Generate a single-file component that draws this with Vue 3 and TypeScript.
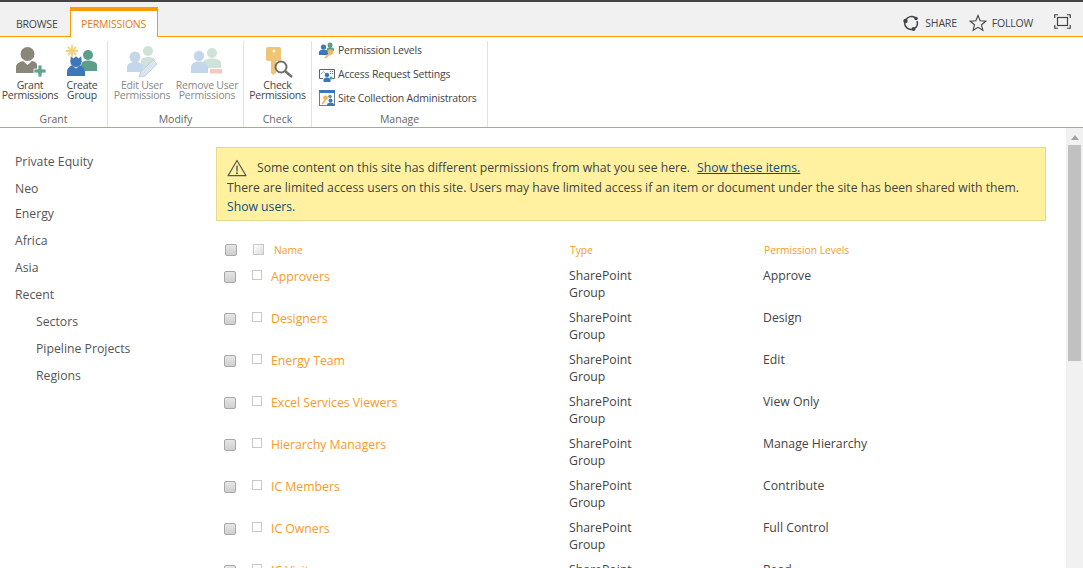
<script setup lang="ts">
interface Row { name: string; level: string }
const nav = ['Private Equity', 'Neo', 'Energy', 'Africa', 'Asia', 'Recent']
const sub = ['Sectors', 'Pipeline Projects', 'Regions']
const rows: Row[] = [
  { name: 'Approvers', level: 'Approve' },
  { name: 'Designers', level: 'Design' },
  { name: 'Energy Team', level: 'Edit' },
  { name: 'Excel Services Viewers', level: 'View Only' },
  { name: 'Hierarchy Managers', level: 'Manage Hierarchy' },
  { name: 'IC Members', level: 'Contribute' },
  { name: 'IC Owners', level: 'Full Control' },
  { name: 'IC Visitors', level: 'Read' },
]
</script>

<template>
  <div class="page">
    <div class="topline"></div>
    <div class="tabbar">
      <div class="tab">BROWSE</div>
      <div class="tab active">PERMISSIONS</div>
      <div class="spacer"></div>
      <div class="action share">
        <svg width="18" height="18" viewBox="0 0 18 18"><path d="M4 5.500A6.500 6.500 0 0 1 13 3.500M15 7a6.500 6.500 0 0 1-2.500 7.500M10 15.400A6.500 6.500 0 0 1 2.600 9" fill="none" stroke="#444" stroke-width="1.500"/><circle cx="3.500" cy="7" r="2.200" fill="#444"/><circle cx="14" cy="4.500" r="1.800" fill="#444"/><circle cx="11.500" cy="15" r="2" fill="#444"/></svg>
        <span>SHARE</span>
      </div>
      <div class="action">
        <svg width="18" height="18" viewBox="0 0 18 18"><path d="M9 1.500l2.200 5.300 5.600.4-4.300 3.600 1.400 5.500L9 13.300l-4.900 3 1.400-5.500-4.300-3.600 5.600-.4z" fill="none" stroke="#444" stroke-width="1.100"/></svg>
        <span>FOLLOW</span>
      </div>
      <svg class="focus" width="17" height="15" viewBox="0 0 17 15"><path d="M.75 4V.75H4M13 .75h3.250V4M16.250 11v3.250H13M4 14.250H.75V11" fill="none" stroke="#444" stroke-width="1.200"/><rect x="3.500" y="3.500" width="10" height="8" fill="none" stroke="#444" stroke-width="1.200"/></svg>
    </div>

    <div class="ribbon">
      <div class="group g1">
        <div class="cmds">
          <div class="big w60">
            <svg width="34" height="34" viewBox="-3 -2 34 34">
              <circle cx="11.500" cy="8" r="7" fill="#8a867a"/>
              <path d="M0 27v-6c0-3 3-5 7-6l4.500 4 4.500-4c3 .6 5 2 5 4v8z" fill="#8a867a"/>
              <path d="M22 19h4v4h4v4h-4v4h-4v-4h-4v-4h4z" fill="#5fa58d" stroke="#fff" stroke-width=".8"/>
            </svg>
            <span>Grant<br>Permissions</span>
          </div>
          <div class="big w44">
            <svg width="34" height="34" viewBox="-1 0 34 34">
              <g stroke="#f3d27f" stroke-width="1.800"><path d="M6 1v12M0 7h12M1.800 2.800l8.400 8.400M10.200 2.800l-8.400 8.400"/></g>
              <circle cx="22" cy="11" r="5" fill="#5b9f8a"/>
              <path d="M15 27v-6c0-3 3-4.500 7-4.500s9 1.500 9 4.500v6z" fill="#5b9f8a"/>
              <path d="M4.500 12l3 2 2.500-2 2.500 2 3-2 .5 5.500a6 6 0 0 1-12 0z" fill="#3a78b9" stroke="#fff" stroke-width=".6"/>
              <path d="M1 32v-4c0-3.500 3-6 5-6.500l4 3 4-3c2 .5 5 3 5 6.500v4z" fill="#3a78b9"/>
            </svg>
            <span>Create<br>Group</span>
          </div>
        </div>
        <div class="label">Grant</div>
      </div>
      <div class="group g2">
        <div class="cmds faded">
          <div class="big w68">
            <svg width="34" height="34" viewBox="-1 -2 34 34">
              <circle cx="22" cy="5" r="5" fill="#cfe2d9"/>
              <path d="M15 22v-7c0-3 3-4 7-4s7 1 7 3l-9 9z" fill="#cfe2d9"/>
              <circle cx="9" cy="11" r="5.500" fill="#c4d6ea"/>
              <path d="M1 26v-5c0-3 3-5 8-5s8 2 8 5v5z" fill="#c4d6ea"/>
              <path d="M13 31l1.500-5L27 14l4 4-12 12z" fill="#dbe5ee" stroke="#b6c8dc" stroke-width=".8"/>
            </svg>
            <span>Edit User<br>Permissions</span>
          </div>
          <div class="big w62">
            <svg width="34" height="34" viewBox="0 -2 34 34">
              <circle cx="22" cy="7" r="5" fill="#cfe2d9"/>
              <path d="M13 22v-5c0-3 4-4.500 9-4.500s9 1.500 9 4.500v5z" fill="#cfe2d9"/>
              <circle cx="9" cy="10" r="5.500" fill="#c4d6ea" stroke="#fff" stroke-width=".6"/>
              <path d="M1 27v-6c0-3 3-5.500 8-5.500s9 2.500 9 5.500v6z" fill="#c4d6ea"/>
              <rect x="20" y="23" width="12" height="4.500" fill="#f2c9bf"/>
            </svg>
            <span>Remove User<br>Permissions</span>
          </div>
        </div>
        <div class="label">Modify</div>
      </div>
      <div class="group g3">
        <div class="cmds">
          <div class="big">
            <svg width="34" height="34" viewBox="-5 -2 34 34">
              <path d="M3 1h11a2 2 0 0 1 2 2v10a2 2 0 0 1-2 2h-3v12l-3 2-2-2V15H3a2 2 0 0 1-2-2V3a2 2 0 0 1 2-2z" fill="#eec673"/>
              <circle cx="9" cy="5" r="1.500" fill="#fff6dc"/>
              <circle cx="16" cy="21" r="5.500" fill="#fff" stroke="#6f6f68" stroke-width="2"/>
              <path d="M20 25l7 6" stroke="#6f6f68" stroke-width="2.400"/>
            </svg>
            <span>Check<br>Permissions</span>
          </div>
        </div>
        <div class="label">Check</div>
      </div>
      <div class="group g4">
        <div class="small-list">
          <div class="small">
            <svg width="16" height="16" viewBox="0 0 16 16">
              <circle cx="11" cy="3" r="2.500" fill="#5b9f8a"/>
              <path d="M8 9V7c0-1 1.500-2 3-2s4 1 4 2v2z" fill="#5b9f8a"/>
              <circle cx="4.500" cy="5" r="2.600" fill="#3a78b9"/>
              <path d="M0 13v-3c0-1.500 2-2.500 4.500-2.500S9 8.500 9 10v3z" fill="#3a78b9"/>
              <circle cx="11.500" cy="10" r="2.800" fill="#eeb66b"/>
              <path d="M10 11.500L5.500 16l1.500 0 4.500-4z" fill="#eeb66b" stroke="#eeb66b"/>
            </svg>
            <span>Permission Levels</span>
          </div>
          <div class="small">
            <svg width="16" height="16" viewBox="0 0 16 16">
              <path d="M4 12.500H.5v-9h15v9H13" fill="#fff" stroke="#666"/>
              <path d="M2 8l2.500-2.500L7 8" fill="none" stroke="#8ab5a7"/>
              <path d="M11 5.500h3M11 7.500h3" stroke="#3a78b9" stroke-dasharray="1 1"/>
              <circle cx="8" cy="9" r="2.200" fill="#3a78b9"/>
              <path d="M4.500 16v-2c0-1.500 1.500-2.500 3.500-2.500s3.500 1 3.500 2.500v2z" fill="#3a78b9"/>
              <circle cx="12" cy="12" r="1.500" fill="#5b9f8a"/>
            </svg>
            <span>Access Request Settings</span>
          </div>
          <div class="small">
            <svg width="16" height="16" viewBox="0 0 16 16">
              <rect x=".5" y=".5" width="15" height="15" fill="#fff" stroke="#6a7f96"/>
              <rect x="0" y="0" width="16" height="3" fill="#3a78b9"/>
              <circle cx="6.500" cy="8" r="2.400" fill="#eeb66b"/>
              <path d="M5.500 9.500l-3 4 1.500 1 3-4z" fill="#eeb66b"/>
              <circle cx="11" cy="6.500" r="1.800" fill="#5b9f8a"/>
              <circle cx="11.500" cy="10.500" r="2" fill="#3a78b9"/>
              <path d="M8 16v-1.500c0-1 1.500-2 3.500-2s3.500 1 3.500 2V16z" fill="#3a78b9"/>
            </svg>
            <span>Site Collection Administrators</span>
          </div>
        </div>
        <div class="label">Manage</div>
      </div>
    </div>

    <div class="workspace">
      <div class="main">
        <nav class="nav">
          <div v-for="n in nav" :key="n" class="nav-item" :class="{ tight: n === 'Neo' }">{{ n }}</div>
          <div v-for="s in sub" :key="s" class="nav-item nested">{{ s }}</div>
        </nav>
        <div class="content">
          <div class="notice">
            <div class="notice-first">
              <svg width="20" height="18" viewBox="0 0 20 18"><path d="M10 1.500L19 16.700H1z" fill="none" stroke="#555" stroke-width="1.200" stroke-linejoin="round"/><path d="M10 6.500v6" stroke="#555" stroke-width="1.400"/><circle cx="10" cy="14.300" r="1" fill="#555"/></svg>
              <span>Some content on this site has different permissions from what you see here.</span>
              <a class="link under">Show these items.</a>
            </div>
            <div class="notice-line">There are limited access users on this site. Users may have limited access if an item or document under the site has been shared with them.</div>
            <div class="notice-line"><a class="link">Show users.</a></div>
          </div>
          <div class="table">
            <div class="head">
              <span class="cb big-cb"></span>
              <span class="cb small-cb head-cb"></span>
              <span class="head-name">Name</span>
              <span>Type</span>
              <span>Permission Levels</span>
            </div>
            <div v-for="r in rows" :key="r.name" class="row">
              <span class="cb big-cb"></span>
              <span class="cb small-cb"></span>
              <span class="name">{{ r.name }}</span>
              <span>SharePoint<br>Group</span>
              <span>{{ r.level }}</span>
            </div>
          </div>
        </div>
      </div>
      <div class="scrollbar">
        <div class="arrow"></div>
        <div class="thumb"></div>
      </div>
    </div>
  </div>
</template>

<style>
html, body { margin: 0; overflow: hidden; }
</style>

<style scoped>
.page {
  width: 1083px; height: 568px; overflow: hidden; background: #fff;
  font-family: "Open Sans", "Noto Sans", sans-serif; color: #444; display: flex; flex-direction: column;
  font-size: 12.250px;
}
.topline { height: 2px; background: #444; flex: none; }
.tabbar {
  height: 34px; background: #f1f1f1; border-bottom: 1px solid #f90; display: flex; align-items: flex-end;
  padding-left: 4px; flex: none; position: relative;
}
.tab { height: 24px; padding: 5px 12px 0; line-height: 24px; font-size: 10.500px; color: #444; letter-spacing: -.2px; }
.tab.active {
  height: 26px; line-height: 26px; background: #fff; color: #e07b10; border: 1px solid #f90; border-top: 4px solid #f90; border-bottom: 0;
  padding: 0 10.500px; margin-bottom: -1px;
}
.spacer { flex: 1; }
.action { display: flex; align-items: center; gap: 5px; height: 26px; font-size: 10.500px; margin-right: 13px; letter-spacing: -.2px; }
.action.share { margin-right: 12px; }
.focus { margin: 0 12px 7px 8px; }
.ribbon { height: 90px; border-bottom: 1px solid #f90; display: flex; flex: none; }
.group { border-right: 1px solid #e1e1e1; margin-top: 4px; display: flex; flex-direction: column; box-sizing: border-box; height: 86px; align-items: center; }
.g1 { width: 108px; }
.g2 { width: 136px; }
.g3 { width: 68px; }
.g4 { width: 176px; }
.cmds { display: flex; flex: 1; width: 100%; justify-content: center; min-height: 0; }
.g1 .cmds, .g2 .cmds { justify-content: flex-start; }
.w60 { width: 60px; }
.w44 { width: 44px; }
.w68 { width: 68px; }
.w62 { width: 62px; }
.faded { color: #888; }
.big { display: flex; flex-direction: column; align-items: center; font-size: 10.500px; line-height: 10px; text-align: center; letter-spacing: -.25px; white-space: nowrap; }
.big svg { margin-top: 3px; margin-bottom: 2px; flex: none; }
.label { height: 15px; font-size: 10.500px; color: #666; line-height: 14px; text-align: center; }
.small-list { flex: 1; width: 100%; padding-left: 7px; box-sizing: border-box; margin-top: -3px; min-height: 0; }
.small { display: flex; align-items: center; height: 24px; gap: 3px; font-size: 10.500px; letter-spacing: -.2px; white-space: nowrap; }
.workspace { flex: 1; display: flex; min-height: 0; }
.main { flex: 1; display: flex; min-width: 0; overflow: hidden; }
.nav { width: 216px; flex: none; padding: 20px 0 0 15px; box-sizing: border-box; }
.nav-item { height: 27px; line-height: 27px; color: #555; }
.nav-item.tight { height: 25px; }
.nav-item.nested { padding-left: 21px; }
.content { flex: 1; padding-top: 19px; min-width: 0; padding-right: 20px; }
.notice {
  background: #fff1a0; border: 1px solid #e2d98a; height: 74px; box-sizing: border-box; padding: 9px 10px 0; width: 830px;
  font-size: 12.200px; color: #444; line-height: 19px; white-space: nowrap;
}
.notice-first { display: flex; align-items: center; gap: 7px; height: 21px; }
.notice-first svg { margin-right: 3px; }
.link { color: #0f4c81; }
.under { text-decoration: underline; }
.table { margin-top: 18px; }
.head, .row { display: grid; grid-template-columns: 28px 19px 298px 194px 1fr; }
.head { height: 21px; font-size: 10.250px; color: #f79a2a; align-items: center; padding-left: 9px; }
.head-name { margin-left: 2px; }
.row { height: 42px; line-height: 17px; padding: 7px 0 0 8px; align-items: start; box-sizing: border-box; }
.name { color: #f79a2a; margin-top: 1px; }
.cb { display: block; box-sizing: border-box; }
.big-cb { width: 12px; height: 12px; background: linear-gradient(#e6e6e6, #cfcfcf); border: 1px solid #a8a8a8; border-radius: 2px; margin-top: 4px; }
.small-cb { width: 10px; height: 10px; background: #fff; border: 1px solid #c8c8c8; margin-top: 3px; }
.head .big-cb, .head .small-cb { margin-top: 0; }
.head-cb { background: linear-gradient(135deg, #fff, #ddd); height: 11px; width: 11px; }
.scrollbar { width: 17px; flex: none; background: #f1f1f1; }
.arrow { width: 0; height: 0; border-left: 4px solid transparent; border-right: 4px solid transparent; border-bottom: 5px solid #a3a3a3; margin: 7px auto 0; }
.thumb { width: 13px; height: 216px; background: #c1c1c1; margin: 5px auto 0; }
</style>
